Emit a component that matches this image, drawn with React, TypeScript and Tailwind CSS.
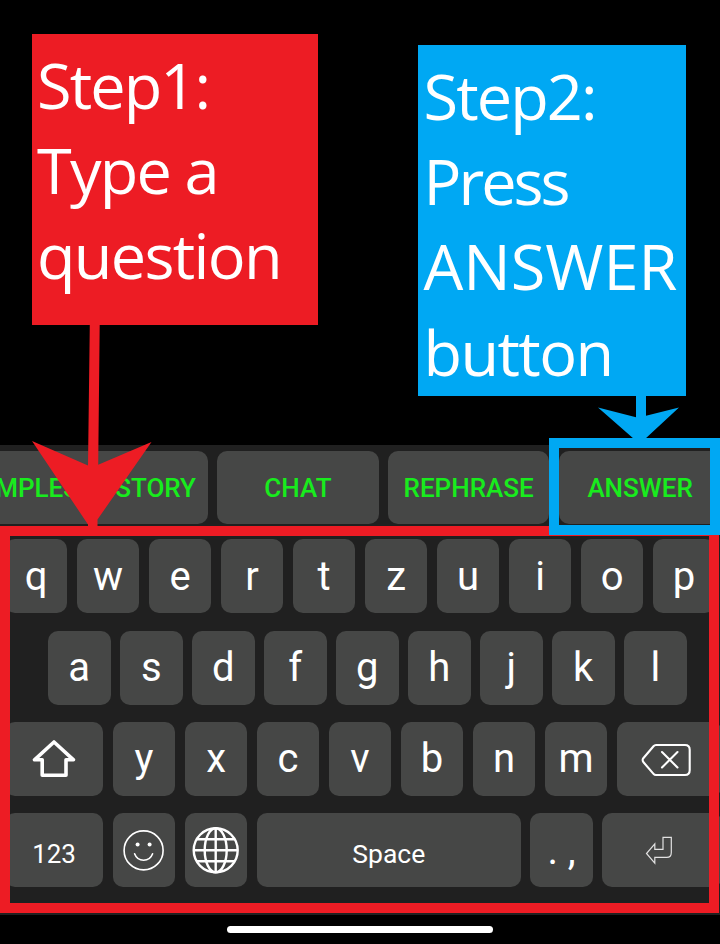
import type { ReactNode } from 'react';

const SANS = "font-['Open_Sans','Noto_Sans',sans-serif]";

function Key({ w = 'w-[62.5px]', text = 'text-[40px]', children }: { w?: string; text?: string; children: ReactNode }) {
  return (
    <div className={`flex h-[74px] shrink-0 items-center justify-center rounded-[10px] bg-[#464746] text-white ${w} ${text}`}>
      {children}
    </div>
  );
}

function Letters({ letters }: { letters: string }) {
  return (
    <>
      {letters.split('').map((c) => (
        <Key key={c} w="w-[62.5px] pt-[1px]">{c}</Key>
      ))}
    </>
  );
}

function Action({ w = 'w-[161.5px]', children }: { w?: string; children: ReactNode }) {
  return (
    <div className={`flex h-[73px] shrink-0 items-center justify-center rounded-[10px] bg-[#464746] pt-[2px] text-[26px] font-medium whitespace-nowrap text-[#18ec1d] ${w}`}>
      {children}
    </div>
  );
}

export default function App() {
  return (
    <div className="relative flex h-[944px] w-[720px] flex-col overflow-hidden bg-black font-[Roboto,sans-serif]">
      <div className={`flex h-[445px] shrink-0 items-start justify-between pr-[34px] pl-[32px] text-[63px] leading-[85.2px] text-white ${SANS}`}>
        <div className="mt-[34px] h-[291px] w-[286px] bg-[#ed1c24] pt-[8px] pl-[5px] whitespace-nowrap">
          <div className="tracking-[-1.9px]">Step1:</div>
          <div className="tracking-[-1.8px]">Type a</div>
          <div className="tracking-[-1.7px]">question</div>
        </div>
        <div className="mt-[45px] h-[351px] w-[268px] bg-[#00a8f3] pt-[8px] pl-[5.5px] whitespace-nowrap">
          <div className="tracking-[-1.9px]">Step2:</div>
          <div className="tracking-[-3px]">Press</div>
          <div className="tracking-[0px]">ANSWER</div>
          <div className="tracking-[-1.6px]">button</div>
        </div>
      </div>

      <div className="h-[470px] w-[720px] shrink-0 overflow-hidden bg-[#202020] pt-[6px]">
        <div className="flex gap-[9.2px]">
          <Action w="-ml-[72px] w-[280px] [word-spacing:4px]"><span className="ml-auto pr-[12px]">EXAMPLES HISTORY</span></Action>
          <Action>CHAT</Action>
          <Action>REPHRASE</Action>
          <Action w="w-[163px]">ANSWER</Action>
        </div>
        <div className="mt-[15.3px] flex flex-col gap-[17.3px]">
          <div className="flex gap-[9.5px] pl-[4.8px]">
            <Letters letters="qwertzuiop" />
          </div>
          <div className="flex gap-[9.5px] pl-[48px]">
            <Letters letters="asdfghjkl" />
          </div>
          <div className="flex gap-[9.5px] pl-[4.8px]">
            <Key w="w-[98.5px]">
              <svg className="h-[44px] w-[50px]" viewBox="29 736 50 44" fill="none" stroke="white" strokeWidth="3.6" strokeLinejoin="round">
                <path d="M54 741 L34.5 758.8 H42.2 V774.2 H66 V758.8 H73.5 Z" />
              </svg>
            </Key>
            <Letters letters="yxcvbnm" />
            <Key w="w-[105px] pr-[6px] pt-[2px]">
              <svg className="h-[38px] w-[54px]" viewBox="639 741 54 38" fill="none" stroke="white" strokeWidth="2.1" strokeLinejoin="round" strokeLinecap="round">
                <path d="M656 745 H685 Q689.7 745 689.7 749.7 V770.3 Q689.7 775 685 775 H656 Q654.5 775 653.5 773.8 L643.3 762 Q642 760 643.3 758.2 L653.5 746.2 Q654.5 745 656 745 Z M662 752 L677.5 767.5 M677.5 752 L662 767.5" />
              </svg>
            </Key>
          </div>
          <div className="flex gap-[9.5px] pl-[4.8px]">
            <Key w="w-[98.5px] pt-[9px]" text="text-[26px]">123</Key>
            <Key>
              <svg className="h-[44px] w-[44px]" viewBox="122 828 44 44" fill="none" stroke="white" strokeWidth="1.6" strokeLinecap="round">
                <circle cx="143.6" cy="850.4" r="19.5" />
                <path d="M134.6 853.8 Q137 860.3 143.6 860.3 Q150.2 860.3 152.6 853.8" />
                <circle cx="137.6" cy="844.6" r="2" fill="white" stroke="none" />
                <circle cx="149.6" cy="844.6" r="2" fill="white" stroke="none" />
              </svg>
            </Key>
            <Key>
              <svg className="h-[48px] w-[48px]" viewBox="192 826 48 48" fill="none" stroke="white" strokeWidth="2.4">
                <circle cx="215.7" cy="850.3" r="22" />
                <ellipse cx="215.7" cy="850.3" rx="11" ry="22" />
                <path d="M215.7 828 V872 M193.7 850.3 H237.7 M197 839.3 H234.4 M197 861.3 H234.4" />
              </svg>
            </Key>
            <Key w="w-[264px] pt-[8px]" text="text-[26.5px]">Space</Key>
            <Key>
              <span className="pt-[2px] whitespace-nowrap">. ,</span>
            </Key>
            <Key w="w-[120px]">
              <svg className="mr-[7px] h-[32px] w-[32px]" viewBox="643 834 32 32" fill="none" stroke="#e2e2e2" strokeWidth="1.2">
                <path d="M663 837.3 H671.3 V852.5 Q671.3 857.4 666.8 857.4 H654.8 V863.2 L646.5 853.5 L654.8 843.8 V849.3 H663 Z" />
              </svg>
            </Key>
          </div>
        </div>
      </div>
      <div className="mx-auto mt-[11px] h-[7px] w-[266px] shrink-0 rounded-full bg-white" />

      {/* Callout frames and arrows laid over the keyboard */}
      <div className="absolute top-[526px] left-0 h-[387px] w-[719px] border-[10px] border-[#ed1c24]" />
      <div className="absolute top-[438px] left-[549px] h-[97px] w-[171px] border-[10px] border-[#00a8f3]" />
      <svg className="absolute top-0 left-0 h-[944px] w-[720px]" viewBox="0 0 720 944">
        <path fill="#ed1c24" d="M89.8 324 H99.7 L98.2 464.7 L151.5 442 L97.5 519.5 V528 H88 V524.5 L32 441 L88 465.5 Z" />
        <path fill="#00a8f3" d="M636 395 H646 V415.7 L679 407.5 L645 439 H634 L598 407.5 L636 417.3 Z" />
      </svg>
    </div>
  );
}
